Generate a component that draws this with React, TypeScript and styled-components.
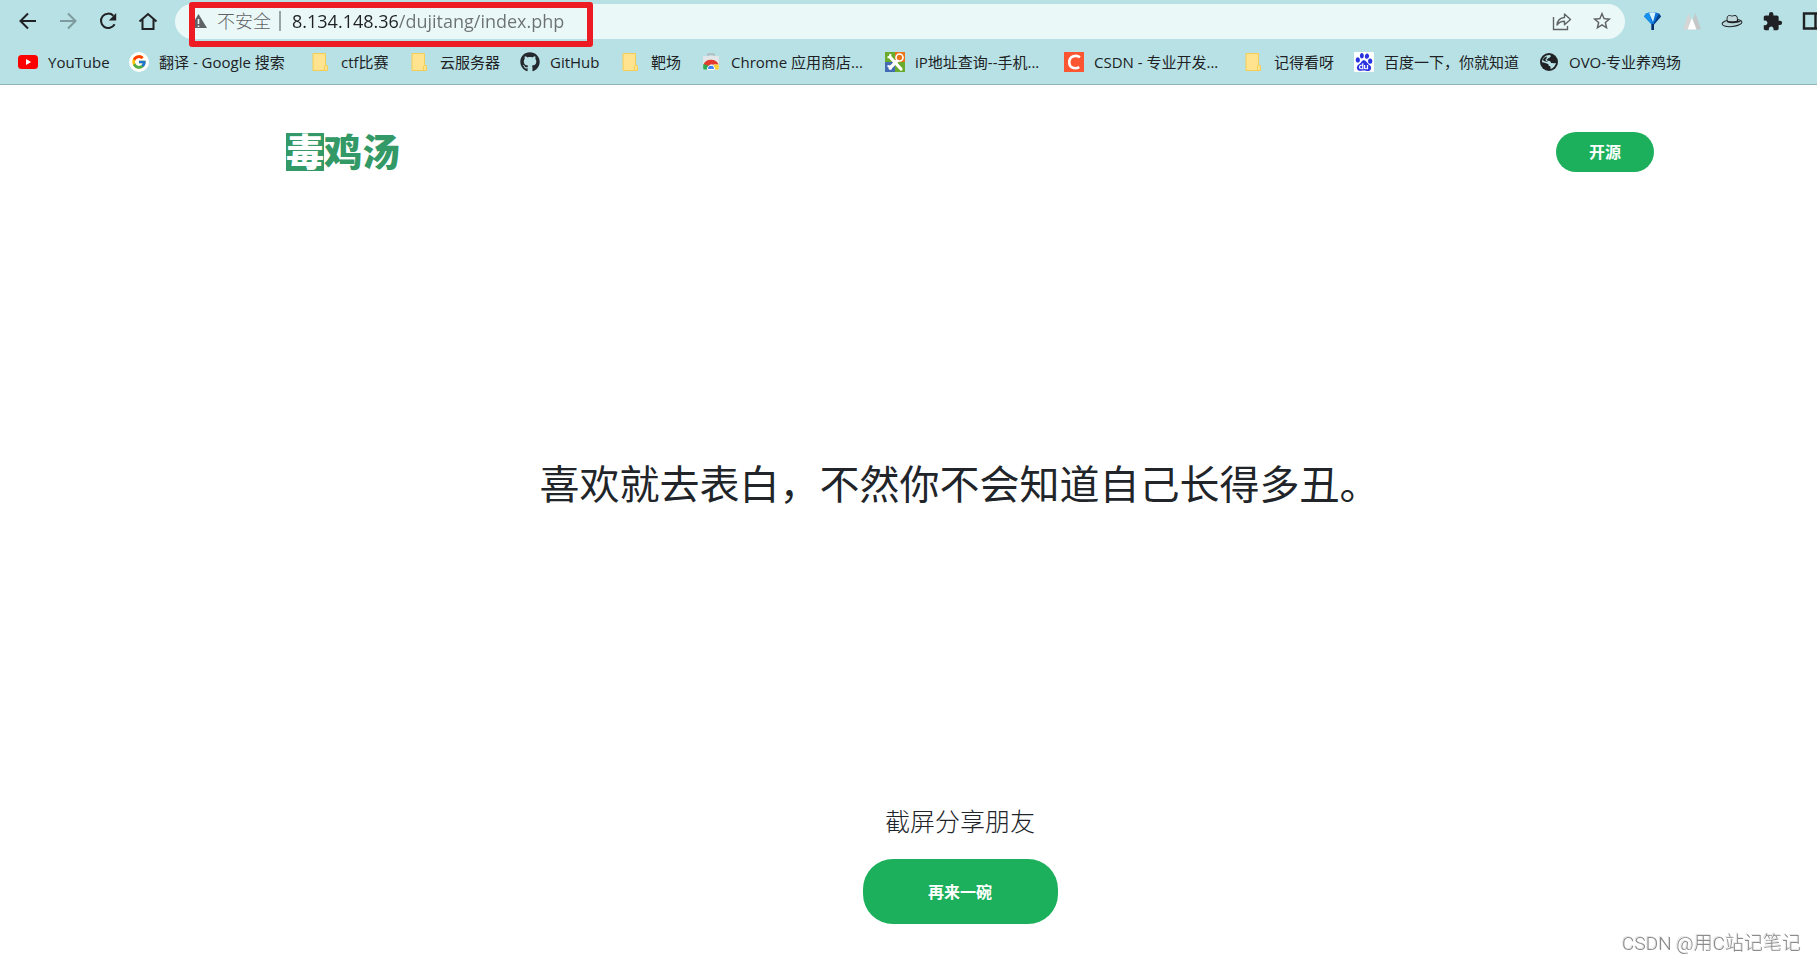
import React from "react";
import styled, { createGlobalStyle } from "styled-components";
import { MdExtension, MdStarBorder } from "react-icons/md";
import { FcGoogle } from "react-icons/fc";
import { FaGithub } from "react-icons/fa";
import { SiBaidu } from "react-icons/si";

const GlobalStyle = createGlobalStyle`
  * { box-sizing: border-box; }
  body {
    margin: 0;
    background: #fff;
    color: #212529;
    font-family: "Open Sans", "Noto Sans CJK SC", sans-serif;
    overflow: hidden;
  }
  button, input { font-family: inherit; }
`;

const Screen = styled.div`
  min-height: 100vh;
  display: flex;
  flex-direction: column;
`;

const Browser = styled.header`
  background: #b7e1e4;
  border-bottom: 1px solid #8fb3b7;
`;

const Toolbar = styled.div`
  display: flex;
  align-items: center;
  height: 42px;
  padding-left: 16px;
`;

const NavButtons = styled.div`
  display: flex;
  gap: 16px;
  margin-right: 15px;
`;

const IconButton = styled.button<{ $muted?: boolean }>`
  display: grid;
  place-items: center;
  flex: none;
  width: 24px;
  height: 24px;
  padding: 0;
  border: 0;
  background: none;
  color: ${(p) => (p.$muted ? "#7d9a9d" : "#202124")};
`;

const AddressBar = styled.form`
  position: relative;
  flex: 1;
  min-width: 0;
  display: flex;
  align-items: center;
  height: 35px;
  padding: 0 11px 0 16px;
  border-radius: 18px;
  background: #ebf8f8;
  color: #5f6368;
`;

const Security = styled.label`
  display: flex;
  align-items: center;
  gap: 9px;
  flex: none;
  font-size: 18px;
  font-weight: 300;
  line-height: 24px;
`;

const Divider = styled.span`
  width: 2px;
  height: 20px;
  margin: 0 11px 0 8px;
  background: #9aa3a6;
`;

const Url = styled.input`
  flex: 1;
  min-width: 0;
  padding: 0;
  border: 0;
  outline: 0;
  font-size: 18px;
  line-height: 24px;
  color: #202124;
  background: linear-gradient(to right, #202124 106px, #6b7175 106px);
  -webkit-background-clip: text;
  background-clip: text;
  -webkit-text-fill-color: transparent;
`;

const AddressActions = styled.div`
  display: flex;
  gap: 16px;

  button { color: #5f6368; }
`;

const Highlight = styled.div`
  position: absolute;
  z-index: 1;
  left: 14px;
  top: -2px;
  width: 404px;
  height: 45px;
  border: 6px solid #ed1c24;
  border-radius: 3px;
  pointer-events: none;
`;

const Extensions = styled.div`
  display: flex;
  gap: 16px;
  margin-left: 15px;
  width: 177px;
  overflow: hidden;
`;

const Bookmarks = styled.nav`
  display: flex;
  align-items: center;
  height: 42px;
  padding: 0 0 2px 18px;
  overflow: hidden;
`;

const Bookmark = styled.a<{ $width: number }>`
  display: flex;
  align-items: center;
  gap: 10px;
  flex: none;
  width: ${(p) => p.$width}px;
  font-size: 15px;
  line-height: 22px;
  color: #202124;
  text-decoration: none;
  white-space: nowrap;

  svg { flex: none; }
`;

const Page = styled.main`
  flex: 1;
  display: flex;
  flex-direction: column;
`;

const SiteHeader = styled.div`
  display: flex;
  align-items: center;
  justify-content: space-between;
  padding: 47px 163px 0 286px;
`;

const Logo = styled.a`
  display: flex;
  font-size: 38px;
  line-height: 36px;
  font-weight: 900;
  color: #339966;
  text-decoration: none;
`;

const LogoMark = styled.span`
  width: 38px;
  height: 38px;
  background: #339966;
  color: #fff;
`;

const PillButton = styled.button<{ $large?: boolean }>`
  width: ${(p) => (p.$large ? 195 : 98)}px;
  height: ${(p) => (p.$large ? 65 : 40)}px;
  padding: 0;
  border: 0;
  border-radius: ${(p) => (p.$large ? 30 : 20)}px;
  background: #1cb05c;
  color: #fff;
  font-size: 16px;
  font-weight: 700;
  line-height: 24px;
`;

const Quote = styled.h1`
  flex: 1;
  display: flex;
  align-items: center;
  justify-content: center;
  margin: 0;
  padding: 0 0 6px 102px;
  font-size: 40px;
  line-height: 48px;
  font-weight: 400;
`;

const Share = styled.section`
  display: flex;
  flex-direction: column;
  align-items: center;
  gap: 19px;
  padding: 0 0 39px 103px;
`;

const ShareText = styled.p`
  margin: 0;
  font-size: 25px;
  line-height: 38px;
  font-weight: 300;
`;

const Watermark = styled.div`
  position: fixed;
  right: 16px;
  bottom: 7px;
  font-family: Roboto, "Noto Sans CJK SC", sans-serif;
  font-size: 19px;
  line-height: 24px;
  font-weight: 300;
  color: #8c8c8c;
  text-shadow: -1px -1px 0 #e4e4e4;
`;

const Line = ({ d, size = 24, width = 2 }: { d: string; size?: number; width?: number }) => (
  <svg width={size} height={size} viewBox="0 0 24 24" fill="none" stroke="currentColor" strokeWidth={width}>
    <path d={d} />
  </svg>
);

const Reload = () => (
  <svg width="24" height="24" viewBox="0 0 24 24" fill="none">
    <path d="M18.6 15.2A7.2 7.2 0 1 1 17.4 6.8" stroke="currentColor" strokeWidth="2" />
    <path d="M20.2 4v7.4h-7.4z" fill="currentColor" />
  </svg>
);

const Warning = () => (
  <svg width="17" height="20" viewBox="0 0 17 20">
    <path d="M7.5 3 16 17H-1z" fill="#5f6368" />
    <path d="M7.5 8v5M7.5 14.5v1.6" stroke="#ebf8f8" strokeWidth="1.6" />
  </svg>
);

const Youtube = () => (
  <svg width="20" height="20" viewBox="0 0 20 20">
    <rect y="3" width="20" height="14" rx="3.5" fill="#f00" />
    <path d="m8 7 5.2 3L8 13z" fill="#fff" />
  </svg>
);

const Google = () => (
  <svg width="20" height="20" viewBox="0 0 20 20">
    <circle cx="10" cy="10" r="10" fill="#fff" />
    <FcGoogle x="2" y="2" size="16" />
  </svg>
);

const Folder = () => (
  <svg width="20" height="20" viewBox="0 0 20 20">
    <path d="M2 1.5h12.5v11.6l2 .6v4.8H2z" fill="#ffe38f" stroke="#f5cd55" />
    <path d="M13.5 18.5v-4.3l1-1.1" fill="none" stroke="#f5cd55" />
  </svg>
);

const WebStore = () => (
  <svg width="20" height="20" viewBox="0 0 20 20">
    <path d="M7 4V2h6v2" fill="none" stroke="#b5b9bc" strokeWidth="1.4" />
    <path d="M2 4h16v13.5H2z" fill="#e3e6e8" />
    <path d="M2.500 12.500a7.800 6.500 0 0 1 15 0H10l-3 2z" fill="#e33b2e" />
    <path d="M2.500 12c-.6 2-.5 4 0 5.500H8l-1-4z" fill="#2da94f" />
    <path d="M13 12.500h4.500c.6 2 .4 3.500 0 5H12z" fill="#fdd13a" />
    <path d="M6.600 17.500a3.500 3.500 0 1 1 6.800 0z" fill="#4285f4" stroke="#fff" />
  </svg>
);

const IpTools = () => (
  <svg width="20" height="20" viewBox="0 0 20 20">
    <path d="M0 0h10v10H0z" fill="#6aab2d" />
    <path d="M10 0h10v10H10z" fill="#ec7418" />
    <path d="M0 10h10v10H0z" fill="#426bb3" />
    <path d="M10 10h10v10H10z" fill="#6aab2d" />
    <path d="m5 5 11 12M13 8l-8 8" stroke="#fff" strokeWidth="3.2" strokeLinecap="round" />
    <circle cx="14.5" cy="5.500" r="3.500" fill="#ec7418" stroke="#fff" strokeWidth="1.6" />
    <path d="M2.500 5.500 5 5l.5-3M2.500 14l3 .5.5 3" fill="none" stroke="#fff" strokeWidth="2" />
  </svg>
);

const Csdn = () => (
  <svg width="20" height="20" viewBox="0 0 20 20">
    <path d="M0 0h20v20H0z" fill="#fc5531" />
    <path d="M16 5.200C12.500 2.700 5.300 3.600 5.300 10.300c0 6.200 6 6.900 10 4.900" fill="none" stroke="#fff" strokeWidth="2.6" />
  </svg>
);

const Baidu = () => (
  <svg width="20" height="20" viewBox="0 0 20 20">
    <rect width="20" height="20" rx="1" fill="#fff" />
    <SiBaidu x="1" y="1" size="18" color="#2932e1" />
  </svg>
);

const Globe = () => (
  <svg width="20" height="20" viewBox="0 0 20 20">
    <circle cx="10" cy="10" r="9" fill="#202124" />
    <path d="M11 3c1.500 1 .5 2.500-1.200 2.800C9 7 8 7 7.600 8c.6 1 3 .5 3.800 1.400.8.900 0 1.500 1.300 1.700 1.300.2 2.500.2 4.300-.2-.6 3-2.600 5.300-5.400 6-.3-1.300.3-1.900-.5-2.700-1.400-.2-1.900-.7-1.600-1.900C7.200 11.200 5 10.400 3 10.200 3 6 6.500 2.600 11 3z" fill="#b7e1e4" />
    <path d="M5.500 5.500 8 4.500l-.5 2C5.500 7.500 6.500 8.800 9 9.500c-2 .6-4-.5-5.500-1.500z" fill="#202124" />
  </svg>
);

const ShareIcon = () => (
  <svg width="24" height="24" viewBox="0 0 24 24" fill="none" stroke="currentColor" strokeWidth="1.4">
    <path d="M3.500 8v12.500h14V17" />
    <path d="M7 16c.5-4.700 3-7.200 7.500-7.500V5l6 5.500-6 5.300v-3.500c-3.500 0-5.500 1-7.500 3.700z" strokeLinejoin="round" />
  </svg>
);

const Gem = () => (
  <svg width="24" height="24" viewBox="0 0 24 24">
    <path d="M6 4.500Q12 2 19 4.500L21 7.500 14 15.500V21h-2.500v-5.500L4 7.500z" fill="#0b6fd6" />
    <path d="M4 7.500 6 4.500l3-.8L12 15z" fill="#1592ee" />
    <path d="M9 3.700q3.500-.9 6.500 0L13 13z" fill="#d5f3ff" />
    <path d="m19 4.500 2 3-7 8-1 .5z" fill="#083f86" />
    <path d="M11.500 15H14v6h-2.500z" fill="#0a2f66" />
  </svg>
);

const Peak = () => (
  <svg width="24" height="24" viewBox="0 0 24 24">
    <path d="m8.500 4 6 16.500H3z" fill="#d5d5d5" />
    <path d="m15.500 4-7 16.500H21z" fill="#c4c8c9" />
    <path d="m12 9 4.500 11.500h-9z" fill="#fff" />
  </svg>
);

const Hat = () => (
  <svg width="24" height="24" viewBox="0 0 24 24">
    <ellipse cx="12" cy="14" rx="10" ry="3.600" transform="rotate(-6 12 14)" fill="#b7d5d8" stroke="#202124" />
    <path d="M7 12c0-4.500.5-5.500 2.500-5.500 1.500 0 1.500.5 2.500.5s1.500-.5 3-.5c2.200 0 2.500 2 2.500 5.500-2.500 1.500-8 1.500-10.500 0z" fill="#c1d8da" stroke="#202124" />
    <path d="M7 11.500c3 1.300 7.500 1.300 10.500 0l3.500 1c-3 1.500-9.500 2.500-14 .8z" fill="#202124" />
  </svg>
);

const SidePanel = () => (
  <svg width="24" height="24" viewBox="0 0 24 24" fill="none" stroke="currentColor" strokeWidth="2.4">
    <path d="M4 4.500h17v15H4zM15.500 4.500v15" />
  </svg>
);

const bookmarks = [
  { label: "YouTube", width: 111, icon: <Youtube /> },
  { label: "翻译 - Google 搜索", width: 182, icon: <Google /> },
  { label: "ctf比赛", width: 99, icon: <Folder /> },
  { label: "云服务器", width: 110, icon: <Folder /> },
  { label: "GitHub", width: 101, icon: <FaGithub size={20} color="#24292f" /> },
  { label: "靶场", width: 80, icon: <Folder /> },
  { label: "Chrome 应用商店...", width: 184, icon: <WebStore /> },
  { label: "iP地址查询--手机...", width: 179, icon: <IpTools /> },
  { label: "CSDN - 专业开发...", width: 180, icon: <Csdn /> },
  { label: "记得看呀", width: 110, icon: <Folder /> },
  { label: "百度一下，你就知道", width: 185, icon: <Baidu /> },
  { label: "OVO-专业养鸡场", width: 150, icon: <Globe /> },
];

export default function App() {
  return (
    <Screen>
      <GlobalStyle />
      <Browser>
        <Toolbar>
          <NavButtons>
            <IconButton aria-label="后退"><Line d="M20 12H5M12 4.500 4.500 12l7.500 7.500" /></IconButton>
            <IconButton aria-label="前进" $muted><Line d="M4 12h15M12 4.500l7.500 7.500-7.500 7.500" /></IconButton>
            <IconButton aria-label="重新加载"><Reload /></IconButton>
            <IconButton aria-label="主页"><Line d="M3.500 12.500 12 5l8.500 7.500M6.500 10.500V20h11v-9.500" /></IconButton>
          </NavButtons>
          <AddressBar onSubmit={(e) => e.preventDefault()}>
            <Security htmlFor="url"><Warning />不安全</Security>
            <Divider />
            <Url id="url" type="text" defaultValue="8.134.148.36/dujitang/index.php" />
            <AddressActions>
              <IconButton type="button" aria-label="分享"><ShareIcon /></IconButton>
              <IconButton type="button" aria-label="收藏"><MdStarBorder size={22} /></IconButton>
            </AddressActions>
            <Highlight />
          </AddressBar>
          <Extensions>
            <IconButton aria-label="Gem"><Gem /></IconButton>
            <IconButton aria-label="Peak"><Peak /></IconButton>
            <IconButton aria-label="Hat"><Hat /></IconButton>
            <IconButton aria-label="扩展程序"><MdExtension size={21} /></IconButton>
            <IconButton aria-label="侧边栏"><SidePanel /></IconButton>
          </Extensions>
        </Toolbar>
        <Bookmarks>
          {bookmarks.map((b) => (
            <Bookmark key={b.label} href="#" $width={b.width}>
              {b.icon}
              {b.label}
            </Bookmark>
          ))}
        </Bookmarks>
      </Browser>
      <Page>
        <SiteHeader>
          <Logo href="#"><LogoMark>毒</LogoMark>鸡汤</Logo>
          <PillButton>开源</PillButton>
        </SiteHeader>
        <Quote>喜欢就去表白，不然你不会知道自己长得多丑。</Quote>
        <Share>
          <ShareText>截屏分享朋友</ShareText>
          <PillButton $large>再来一碗</PillButton>
        </Share>
      </Page>
      <Watermark>CSDN @用C站记笔记</Watermark>
    </Screen>
  );
}
